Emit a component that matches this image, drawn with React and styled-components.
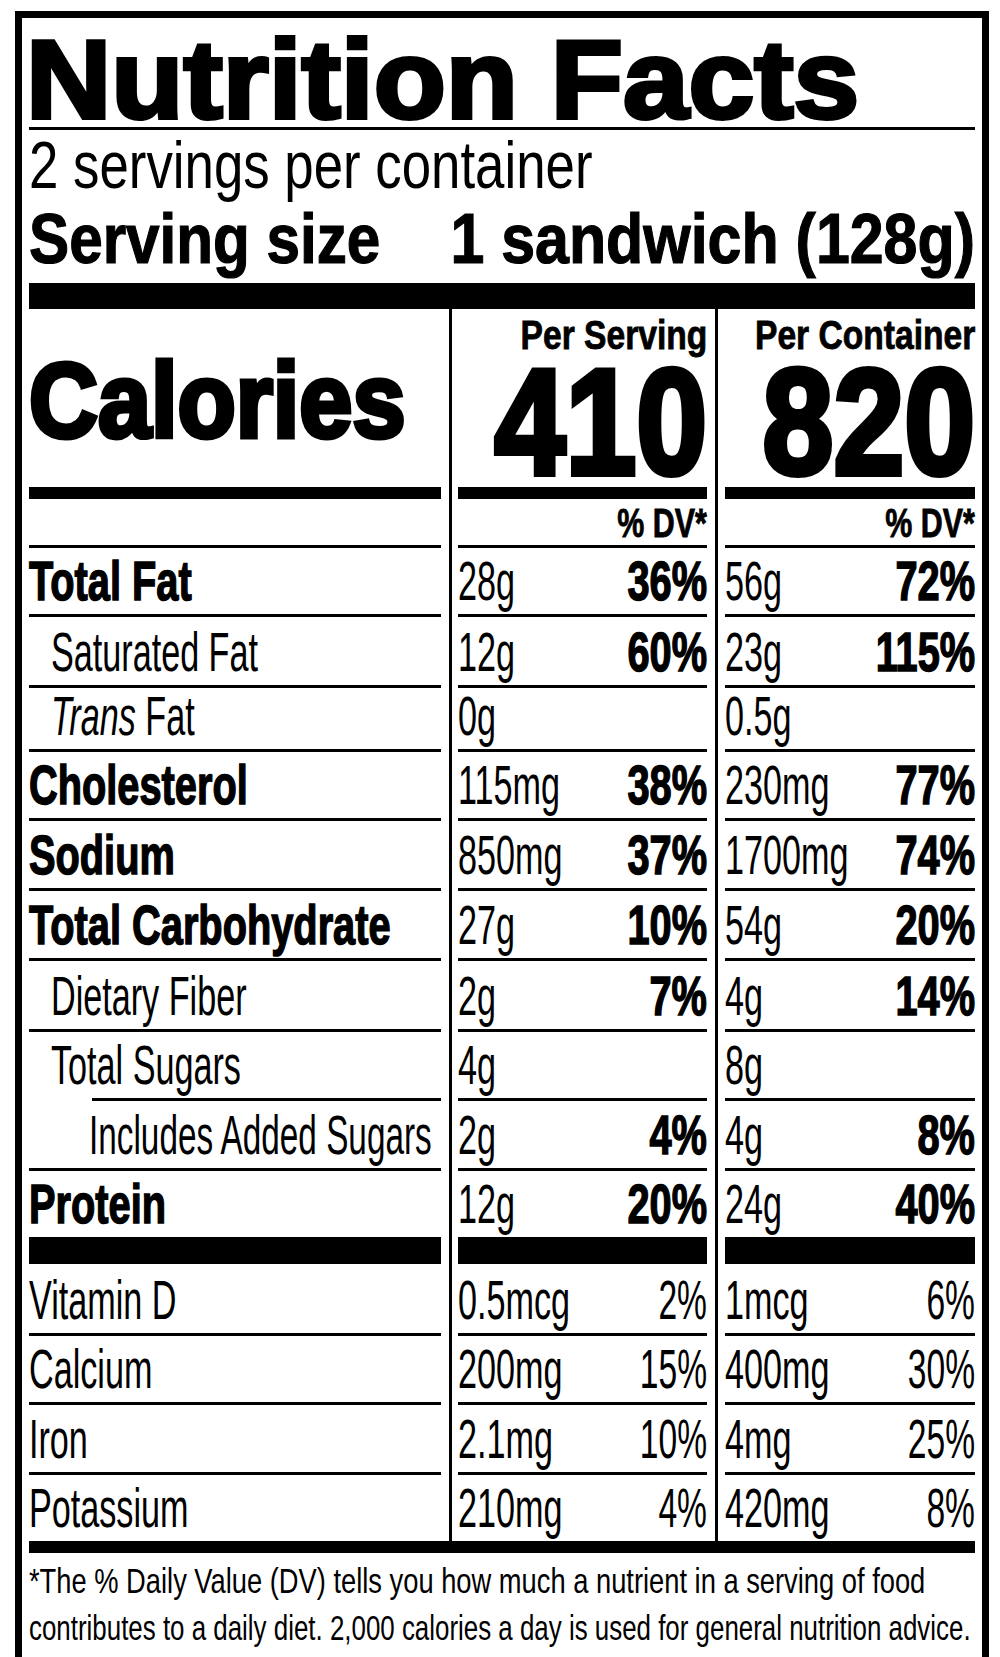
import React from 'react';
import styled, { createGlobalStyle, css } from 'styled-components';

const GlobalStyle = createGlobalStyle`
  html, body {
    margin: 0;
    padding: 0;
    background: #fff;
    overflow: hidden;
  }
  body {
    font-family: "Liberation Sans", Arial, Helvetica, sans-serif;
    color: #000;
  }
`;

// label type is a condensed grotesque, so squeeze Liberation Sans horizontally
const squeeze = (x, origin = 'left') => css`
  display: inline-block;
  white-space: nowrap;
  transform: scaleX(${x});
  transform-origin: ${origin} center;
`;

const Panel = styled.div`
  box-sizing: border-box;
  width: 974px;
  margin: 11px 0 0 15px;
  border: 7px solid #000;
  border-bottom: none;
  padding: 0 7px 30px;
`;

const Title = styled.h1`
  display: flex;
  margin: 0;
  padding-top: 15px;
  font-size: 111px;
  line-height: 94px;
  font-weight: 700;
  border-bottom: 3px solid #000;
`;

const TitleText = styled.span`
  ${squeeze(1.064)}
  margin-left: -3px;
  -webkit-text-stroke: 4px #000;
`;

const Servings = styled.div`
  display: flex;
  padding-top: 5px;
  font-size: 66px;
  line-height: 60px;
`;

const ServingsText = styled.span`
  ${squeeze(0.8)}
`;

const SizeRow = styled.div`
  display: flex;
  font-size: 70px;
  line-height: 88px;
  font-weight: 700;
  border-bottom: 26px solid #000;
`;

const SizeText = styled.span`
  ${(p) => squeeze(p.$x, p.$right ? 'right' : 'left')}
  -webkit-text-stroke: 1.2px #000;
`;

// zero-width slot pinned to the right edge; its text overflows leftwards
const RightSlot = styled.div`
  flex: none;
  width: 0;
  min-width: 0;
  margin-left: auto;
  display: flex;
  justify-content: flex-end;
  align-items: flex-end;
`;

const Facts = styled.div`
  display: grid;
  grid-template-columns: 412px 17px 249px 18px 250px;
`;

const ColumnLine = styled.div`
  grid-column: ${(p) => p.$col};
  grid-row: 1 / span 16;
  width: 3px;
  margin-left: 8px;
  background: #000;
`;

const Cell = styled.div`
  box-sizing: border-box;
  height: ${(p) => p.$h + p.$rule}px;
  padding: 0 0 ${(p) => p.$rule}px ${(p) => p.$indent || 0}px;
  display: flex;
  align-items: flex-end;
  justify-content: ${(p) => (p.$end ? 'flex-end' : 'flex-start')};
  background: linear-gradient(#000, #000) right bottom /
    calc(100% - ${(p) => p.$inset || 0}px) ${(p) => p.$rule}px no-repeat;
`;

const HeadCell = styled(Cell)`
  flex-direction: column;
  justify-content: flex-start;
  align-items: flex-end;
`;

const CaloriesLabel = styled.span`
  ${squeeze(0.9)}
  font-size: 106px;
  line-height: 106px;
  font-weight: 700;
  margin-bottom: 34px;
  -webkit-text-stroke: 5px #000;
`;

const ColHead = styled.span`
  ${squeeze(0.84, 'right')}
  font-size: 40px;
  line-height: 44px;
  font-weight: 700;
  margin-top: 4px;
  -webkit-text-stroke: 0.8px #000;
`;

const BigNumber = styled.span`
  ${squeeze(0.85, 'right')}
  font-size: 150px;
  line-height: 110px;
  font-weight: 700;
  margin-top: 10px;
  -webkit-text-stroke: 6px #000;
`;

const DvHead = styled.span`
  ${squeeze(0.76, 'right')}
  font-size: 40px;
  line-height: 40px;
  font-weight: 700;
  margin-bottom: 2px;
  -webkit-text-stroke: 0.8px #000;
`;

const Name = styled.span`
  ${(p) => squeeze(p.$bold ? 0.71 : 0.61)}
  font-size: 56px;
  line-height: 67px;
  font-weight: ${(p) => (p.$bold ? 700 : 400)};
  -webkit-text-stroke: ${(p) => (p.$bold ? 1.5 : 0)}px #000;
`;

const TightName = styled(Name)`
  transform: scaleX(0.595);
`;

const Italic = styled.i`
  font-style: italic;
`;

const Amount = styled.span`
  ${squeeze(0.61)}
  font-size: 56px;
  line-height: 67px;
`;

const Pct = styled.span`
  ${(p) => squeeze(p.$bold ? 0.71 : 0.6, 'right')}
  font-size: 56px;
  line-height: 67px;
  font-weight: ${(p) => (p.$bold ? 700 : 400)};
  -webkit-text-stroke: ${(p) => (p.$bold ? 1.5 : 0)}px #000;
`;

const BottomBar = styled.div`
  height: 12px;
  background: #000;
`;

const Footnote = styled.div`
  display: flex;
  flex-direction: column;
  align-items: flex-start;
  padding-top: 4px;
  font-size: 35px;
  line-height: 47px;
`;

const FootLine = styled.span`
  ${(p) => squeeze(p.$x)}
`;

const nutrients = [
  { name: 'Total Fat', bold: true, h: 66, serving: ['28g', '36%'], container: ['56g', '72%'] },
  { name: 'Saturated Fat', indent: 22, h: 68, serving: ['12g', '60%'], container: ['23g', '115%'] },
  { name: 'Fat', trans: true, indent: 22, h: 61, serving: ['0g'], container: ['0.5g'] },
  { name: 'Cholesterol', bold: true, h: 66, serving: ['115mg', '38%'], container: ['230mg', '77%'] },
  { name: 'Sodium', bold: true, h: 67, serving: ['850mg', '37%'], container: ['1700mg', '74%'] },
  { name: 'Total Carbohydrate', bold: true, h: 67, serving: ['27g', '10%'], container: ['54g', '20%'] },
  { name: 'Dietary Fiber', indent: 22, h: 68, serving: ['2g', '7%'], container: ['4g', '14%'] },
  { name: 'Total Sugars', indent: 22, h: 66, inset: 63, serving: ['4g'], container: ['8g'] },
  { name: 'Includes Added Sugars', indent: 60, tight: true, h: 67, serving: ['2g', '4%'], container: ['4g', '8%'] },
  { name: 'Protein', bold: true, h: 66, rule: 27, serving: ['12g', '20%'], container: ['24g', '40%'] },
];

const minerals = [
  { name: 'Vitamin D', h: 69, serving: ['0.5mcg', '2%'], container: ['1mcg', '6%'] },
  { name: 'Calcium', h: 66, serving: ['200mg', '15%'], container: ['400mg', '30%'] },
  { name: 'Iron', h: 67, serving: ['2.1mg', '10%'], container: ['4mg', '25%'] },
  { name: 'Potassium', h: 66, rule: 0, serving: ['210mg', '4%'], container: ['420mg', '8%'] },
];

const ValueCell = ({ h, rule, value, bold }) => (
  <Cell $h={h} $rule={rule}>
    <Amount>{value[0]}</Amount>
    {value[1] && (
      <RightSlot>
        <Pct $bold={bold}>{value[1]}</Pct>
      </RightSlot>
    )}
  </Cell>
);

const Row = ({ row, boldPct }) => {
  const rule = row.rule ?? 3;
  const Label = row.tight ? TightName : Name;
  return (
    <>
      <Cell $h={row.h} $rule={rule} $indent={row.indent} $inset={row.inset}>
        <Label $bold={row.bold}>
          {row.trans && (
            <>
              <Italic>Trans</Italic>{' '}
            </>
          )}
          {row.name}
        </Label>
      </Cell>
      <ValueCell h={row.h} rule={rule} value={row.serving} bold={boldPct} />
      <ValueCell h={row.h} rule={rule} value={row.container} bold={boldPct} />
    </>
  );
};

export default function App() {
  return (
    <>
      <GlobalStyle />
      <Panel>
        <Title>
          <TitleText>Nutrition Facts</TitleText>
        </Title>
        <Servings>
          <ServingsText>2 servings per container</ServingsText>
        </Servings>
        <SizeRow>
          <SizeText $x={0.86}>Serving size</SizeText>
          <RightSlot>
            <SizeText $x={0.87} $right>
              1 sandwich (128g)
            </SizeText>
          </RightSlot>
        </SizeRow>

        <Facts>
          <ColumnLine $col={2} />
          <ColumnLine $col={4} />

          <Cell $h={178} $rule={12}>
            <CaloriesLabel>Calories</CaloriesLabel>
          </Cell>
          <HeadCell $h={178} $rule={12}>
            <ColHead>Per Serving</ColHead>
            <BigNumber>410</BigNumber>
          </HeadCell>
          <HeadCell $h={178} $rule={12}>
            <ColHead>Per Container</ColHead>
            <BigNumber>820</BigNumber>
          </HeadCell>

          <Cell $h={46} $rule={3} />
          <Cell $h={46} $rule={3} $end>
            <DvHead>% DV*</DvHead>
          </Cell>
          <Cell $h={46} $rule={3} $end>
            <DvHead>% DV*</DvHead>
          </Cell>

          {nutrients.map((row) => (
            <Row key={row.name} row={row} boldPct />
          ))}
          {minerals.map((row) => (
            <Row key={row.name} row={row} />
          ))}
        </Facts>

        <BottomBar />
        <Footnote>
          <FootLine $x={0.78}>
            *The % Daily Value (DV) tells you how much a nutrient in a serving of food
          </FootLine>
          <FootLine $x={0.74}>
            contributes to a daily diet. 2,000 calories a day is used for general nutrition advice.
          </FootLine>
        </Footnote>
      </Panel>
    </>
  );
}
